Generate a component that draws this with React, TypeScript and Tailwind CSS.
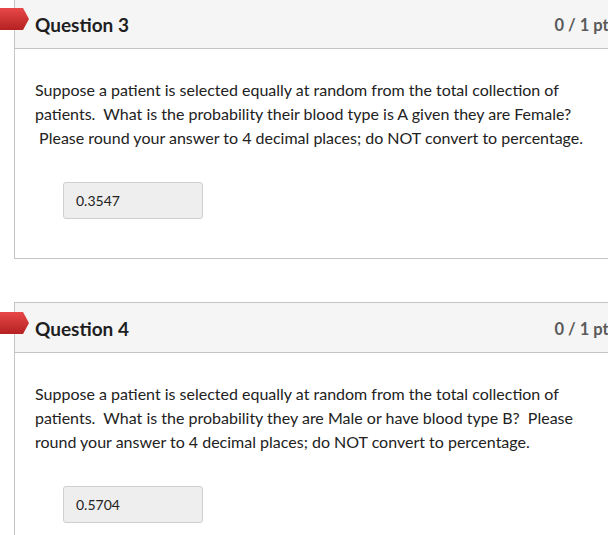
import React from 'react';

type Question = {
  name: string;
  points: string;
  text: string;
  answer: string;
};

const questions: Question[] = [
  {
    name: 'Question 3',
    points: '0 / 1 pts',
    text: 'Suppose a patient is selected equally at random from the total collection of patients.\u00a0 What is the probability their blood type is A given they are Female? \u00a0Please round your answer to 4 decimal places; do NOT convert to percentage.',
    answer: '0.3547',
  },
  {
    name: 'Question 4',
    points: '0 / 1 pts',
    text: 'Suppose a patient is selected equally at random from the total collection of patients.\u00a0 What is the probability they are Male or have blood type B?\u00a0 Please round your answer to 4 decimal places; do NOT convert to percentage.',
    answer: '0.5704',
  },
];

function Flag() {
  return (
    <svg
      className="absolute left-[-15px] top-[9px]"
      width="29"
      height="22"
      viewBox="0 0 29 22"
    >
      <defs>
        <linearGradient id="flagGrad" x1="0" y1="0" x2="0" y2="1">
          <stop offset="0" stopColor="#e84848" />
          <stop offset="1" stopColor="#b52121" />
        </linearGradient>
      </defs>
      <path d="M0 0 H23 L29 11 L23 22 H0 Z" fill="url(#flagGrad)" />
    </svg>
  );
}

function QuestionCard({ q, className }: { q: Question; className?: string }) {
  return (
    <div className={`relative w-[618px] border border-[#c4c4c4] bg-white ${className ?? ''}`}>
      <div className="relative flex h-[50px] items-center justify-between border-b border-[#c4c4c4] bg-[#f5f5f5] pl-5 pr-[15px] pt-[4px]">
        <Flag />
        <h2 className="text-[19px] font-bold text-[#1f1f1f]">{q.name}</h2>
        <span className="text-[16.5px] font-bold text-[#5a5a5a]">{q.points}</span>
      </div>
      <div className="px-5 pt-[29px] pb-[39px]">
        <p className="max-w-[556px] text-[16px] leading-6 text-[#222]">{q.text}</p>
        <div className="ml-7 mt-8 flex h-[37px] w-[140px] items-center rounded-[3px] border border-[#cfcfcf] bg-[#eeeeee] px-3 text-[14px] text-[#222]">
          {q.answer}
        </div>
      </div>
    </div>
  );
}

export default function App() {
  return (
    <div className="h-[535px] w-[608px] overflow-hidden bg-white font-['Lato','Liberation_Sans',sans-serif]">
      <div className="-mt-[2px] pl-[14px]">
        <QuestionCard q={questions[0]} />
        <QuestionCard q={questions[1]} className="mt-[43px]" />
      </div>
    </div>
  );
}
